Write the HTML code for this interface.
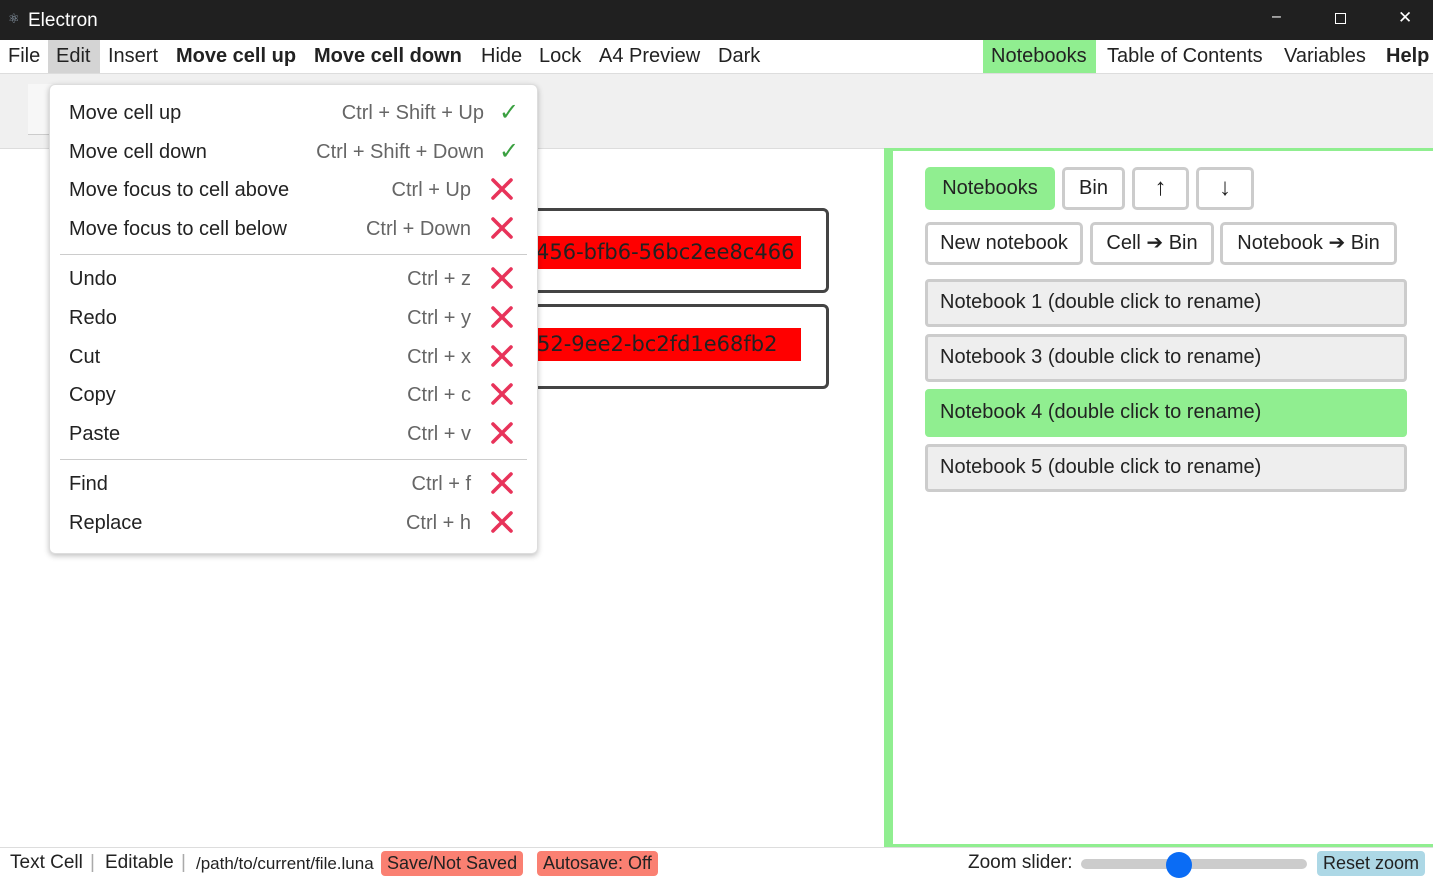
<html><head><style>
body{margin:0;width:1433px;height:877px;overflow:hidden;font-family:"Liberation Sans",sans-serif;background:#fff;position:relative;color:#222}
.a{position:absolute}
.title{left:0;top:0;width:1433px;height:40px;background:#202020;color:#fff;font-size:19px}
.menu{top:40px;left:0;width:1433px;height:33px;background:#fff;border-bottom:1px solid #ddd;font-size:20px}
.menu span{position:absolute;top:5px}
.tool{top:74px;left:0;width:1433px;height:74px;background:#f0f0f0;border-bottom:1px solid #ddd}
.dd{left:49px;top:84px;width:487px;height:468px;background:#fff;border:1px solid #ddd;border-radius:6px;box-shadow:0 2px 6px rgba(0,0,0,.25);font-size:20px}
.it{position:absolute;left:19px;width:450px}
.it .k{position:absolute;right:0;color:#666;top:0}
.it svg{position:absolute;left:421px;top:-2px}
.it .c{position:absolute;left:430px;top:-4px;font-size:24px;color:#3aa040}
.sep{position:absolute;left:10px;width:467px;height:1px;background:#ccc}
.cell{border:3px solid #444;border-radius:6px;background:#fff}
.red{background:#f00;color:#222;font-family:"DejaVu Sans",sans-serif;font-size:21px;height:33px;line-height:33px;white-space:nowrap;overflow:hidden}
.btn{border:3px solid #ccc;border-radius:5px;background:#fff;font-size:20px;box-sizing:border-box;text-align:center;line-height:36px}
.nb{left:925px;width:482px;height:48px;border:3px solid #ccc;border-radius:4px;background:#eee;font-size:20px;box-sizing:border-box;padding-left:12px;line-height:40px}
.st{top:852px;font-size:19px}
.bd{top:851px;font-size:18px;border-radius:4px;padding:2px 6px;background:#fa8072}
</style></head><body>
<svg width="0" height="0" style="position:absolute"><defs><symbol id="x" viewBox="0 0 24 24"><path d="M3 3L21 21M21 3L3 21" stroke="#e8335a" stroke-width="3.6" stroke-linecap="round"/></symbol></defs></svg>
<div class="a title"><span class="a" style="left:8px;top:11px;font-size:13px;color:#9ab">⚛</span><span class="a" style="left:28px;top:10px">Electron</span>
<span class="a" style="left:1272px;top:8px;font-size:16px">–</span>
<span class="a" style="left:1335px;top:13px;width:9px;height:9px;border:1px solid #fff"></span>
<span class="a" style="left:1398px;top:8px;font-size:17px">✕</span></div>
<div class="a menu">
<span style="left:8px">File</span>
<span style="left:48px;top:0;height:33px;width:52px;background:#d4d4d4"></span>
<span style="left:56px">Edit</span><span style="left:108px">Insert</span>
<span style="left:176px;font-weight:bold">Move cell up</span><span style="left:314px;font-weight:bold">Move cell down</span>
<span style="left:481px">Hide</span><span style="left:539px">Lock</span><span style="left:599px">A4 Preview</span><span style="left:718px">Dark</span>
<span style="left:983px;top:0;height:33px;width:113px;background:#90ee90"></span>
<span style="left:991px">Notebooks</span><span style="left:1107px">Table of Contents</span><span style="left:1284px">Variables</span><span style="left:1386px;font-weight:bold">Help</span>
</div>
<div class="a tool"><div class="a" style="left:28px;top:10px;width:30px;height:50px;background:#f7f7f7;border-bottom:1px solid #ccc"></div></div>
<div class="a cell" style="left:520px;top:208px;width:303px;height:79px"><div class="a red" style="left:0;top:25px;width:278px;padding-left:13px;box-sizing:border-box">456-bfb6-56bc2ee8c466</div></div>
<div class="a cell" style="left:520px;top:304px;width:303px;height:79px"><div class="a red" style="left:0;top:21px;width:278px;padding-left:14px;box-sizing:border-box">52-9ee2-bc2fd1e68fb2</div></div>
<div class="a" style="left:884px;top:148px;width:549px;height:699px;background:#90ee90"></div>
<div class="a" style="left:893px;top:151px;width:540px;height:693px;background:#fff"></div>
<div class="a btn" style="left:925px;top:167px;width:130px;height:43px;background:#90ee90;border-color:#90ee90">Notebooks</div>
<div class="a btn" style="left:1062px;top:167px;width:63px;height:43px">Bin</div>
<div class="a btn" style="left:1132px;top:167px;width:57px;height:43px;font-size:24px">↑</div>
<div class="a btn" style="left:1196px;top:167px;width:58px;height:43px;font-size:24px">↓</div>
<div class="a btn" style="left:925px;top:222px;width:158px;height:43px">New notebook</div>
<div class="a btn" style="left:1090px;top:222px;width:124px;height:43px">Cell ➔ Bin</div>
<div class="a btn" style="left:1220px;top:222px;width:177px;height:43px">Notebook ➔ Bin</div>
<div class="a nb" style="top:279px">Notebook 1 (double click to rename)</div>
<div class="a nb" style="top:334px">Notebook 3 (double click to rename)</div>
<div class="a nb" style="top:389px;background:#90ee90;border-color:#90ee90">Notebook 4 (double click to rename)</div>
<div class="a nb" style="top:444px">Notebook 5 (double click to rename)</div>
<div class="a dd">
<div class="it" style="top:17px">Move cell up<span class="k" style="right:35px">Ctrl + Shift + Up</span><span class="c">✓</span></div>
<div class="it" style="top:56px">Move cell down<span class="k" style="right:35px">Ctrl + Shift + Down</span><span class="c">✓</span></div>
<div class="it" style="top:94px">Move focus to cell above<span class="k" style="right:48px">Ctrl + Up</span><svg width="24" height="24"><use href="#x"/></svg></div>
<div class="it" style="top:133px">Move focus to cell below<span class="k" style="right:48px">Ctrl + Down</span><svg width="24" height="24"><use href="#x"/></svg></div>
<div class="sep" style="top:169px"></div>
<div class="it" style="top:183px">Undo<span class="k" style="right:48px">Ctrl + z</span><svg width="24" height="24"><use href="#x"/></svg></div>
<div class="it" style="top:222px">Redo<span class="k" style="right:48px">Ctrl + y</span><svg width="24" height="24"><use href="#x"/></svg></div>
<div class="it" style="top:261px">Cut<span class="k" style="right:48px">Ctrl + x</span><svg width="24" height="24"><use href="#x"/></svg></div>
<div class="it" style="top:299px">Copy<span class="k" style="right:48px">Ctrl + c</span><svg width="24" height="24"><use href="#x"/></svg></div>
<div class="it" style="top:338px">Paste<span class="k" style="right:48px">Ctrl + v</span><svg width="24" height="24"><use href="#x"/></svg></div>
<div class="sep" style="top:374px"></div>
<div class="it" style="top:388px">Find<span class="k" style="right:48px">Ctrl + f</span><svg width="24" height="24"><use href="#x"/></svg></div>
<div class="it" style="top:427px">Replace<span class="k" style="right:48px">Ctrl + h</span><svg width="24" height="24"><use href="#x"/></svg></div>
</div>
<div class="a" style="left:0;top:847px;width:1433px;height:1px;background:#ddd"></div>
<span class="a st" style="left:10px">Text Cell</span><span class="a st" style="left:90px;color:#aaa">|</span>
<span class="a st" style="left:105px">Editable</span><span class="a st" style="left:181px;color:#aaa">|</span>
<span class="a st" style="left:196px;top:854px;font-size:17px">/path/to/current/file.luna</span>
<span class="a bd" style="left:381px">Save/Not Saved</span>
<span class="a bd" style="left:537px">Autosave: Off</span>
<span class="a st" style="left:968px">Zoom slider:</span>
<div class="a" style="left:1081px;top:859px;width:226px;height:10px;background:#ccc;border-radius:5px"></div>
<div class="a" style="left:1166px;top:852px;width:26px;height:26px;background:#0a6cf5;border-radius:50%"></div>
<span class="a bd" style="left:1317px;background:#add8e6">Reset zoom</span>
</body></html>
